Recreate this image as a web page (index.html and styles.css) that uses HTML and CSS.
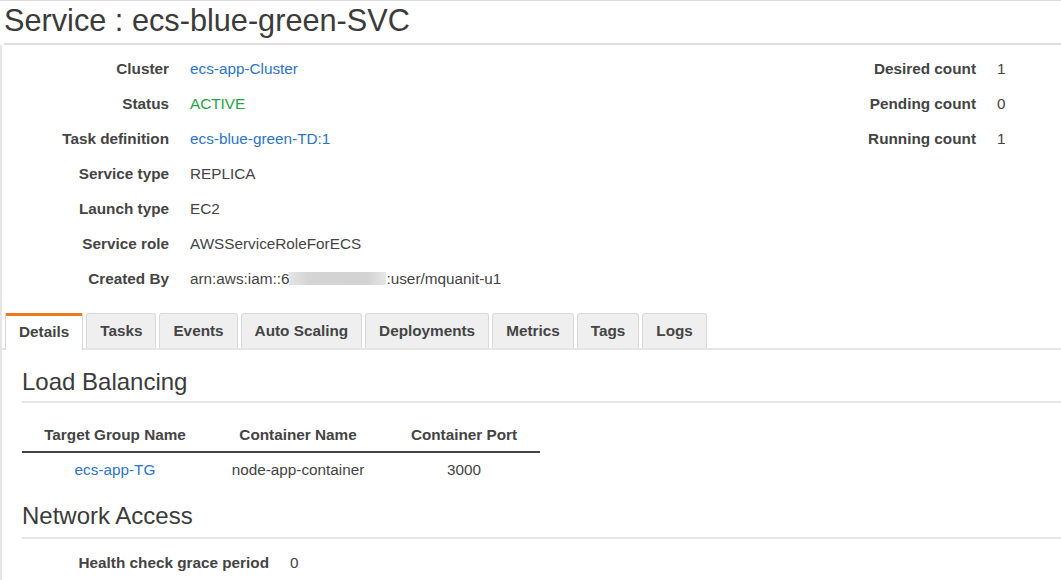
FILE: index.html
```html
<!DOCTYPE html>
<html>
<head>
<meta charset="utf-8">
<title>Service : ecs-blue-green-SVC</title>
<link rel="stylesheet" href="styles.css">
</head>
<body>
<h1 class="title">Service : ecs-blue-green-SVC</h1>
<div class="page">
  <div class="summary">
    <dl class="kv kv-left">
      <dt>Cluster</dt><dd><a class="link" href="#">ecs-app-Cluster</a></dd>
      <dt>Status</dt><dd class="ok">ACTIVE</dd>
      <dt>Task definition</dt><dd><a class="link" href="#">ecs-blue-green-TD:1</a></dd>
      <dt>Service type</dt><dd>REPLICA</dd>
      <dt>Launch type</dt><dd>EC2</dd>
      <dt>Service role</dt><dd>AWSServiceRoleForECS</dd>
      <dt>Created By</dt><dd>arn:aws:iam::6<span class="blur"></span>:user/mquanit-u1</dd>
    </dl>
    <dl class="kv kv-right">
      <dt>Desired count</dt><dd>1</dd>
      <dt>Pending count</dt><dd>0</dd>
      <dt>Running count</dt><dd>1</dd>
    </dl>
  </div>

  <div class="tabs">
    <div class="tab active">Details</div>
    <div class="tab">Tasks</div>
    <div class="tab">Events</div>
    <div class="tab">Auto Scaling</div>
    <div class="tab">Deployments</div>
    <div class="tab">Metrics</div>
    <div class="tab">Tags</div>
    <div class="tab">Logs</div>
  </div>

  <div class="panel">
    <h2 class="section">Load Balancing</h2>
    <table class="lb">
      <thead>
        <tr><th class="c1">Target Group Name</th><th class="c2">Container Name</th><th class="c3">Container Port</th></tr>
      </thead>
      <tbody>
        <tr><td><a class="link" href="#">ecs-app-TG</a></td><td>node-app-container</td><td>3000</td></tr>
      </tbody>
    </table>

    <h2 class="section section-2">Network Access</h2>
    <dl class="kv kv-net">
      <dt>Health check grace period</dt><dd>0</dd>
    </dl>
  </div>
</div>
</body>
</html>
```

FILE: styles.css
```css
html, body {
  margin: 0;
  padding: 0;
  background: #fff;
}
body {
  font-family: "Liberation Sans", Arial, sans-serif;
  font-size: 15.3px;
  color: #444;
  border-top: 1px solid #dcdcdc;
  overflow: hidden;
}
.title {
  margin: 0 0 0 4px;
  font-size: 30.7px;
  font-weight: normal;
  line-height: 40px;
  padding-bottom: 2px;
  color: #3b3b3b;
  border-bottom: 2px solid #dedede;
}
.page {
  border-left: 2px solid #e6e6e6;
}
.summary {
  display: flex;
  justify-content: space-between;
  padding-top: 6px;
}
.kv {
  display: grid;
  margin: 0;
  column-gap: 21px;
  grid-auto-rows: 35px;
  line-height: 35px;
}
.kv dt {
  font-weight: bold;
  text-align: right;
  color: #444;
}
.kv dd {
  margin: 0;
  white-space: nowrap;
}
.kv-left {
  grid-template-columns: 167px auto;
}
.kv-right {
  grid-template-columns: 160px 64px;
}
.link {
  color: #2b74c7;
  text-decoration: none;
}
.ok {
  color: #23a344;
}
.blur {
  display: inline-block;
  width: 97px;
  height: 13px;
  vertical-align: -1px;
  background: linear-gradient(90deg, #e6e6e6, #d4d4d4 20%, #d2d2d2 80%, #e6e6e6);
  filter: blur(0.6px);
}
.tabs {
  display: flex;
  align-items: flex-start;
  margin-top: 17px;
  padding-left: 3px;
  border-bottom: 2px solid #e6e6e6;
  height: 35px;
}
.tab {
  box-sizing: border-box;
  height: 35px;
  line-height: 34px;
  padding: 0 13px;
  margin-right: 3px;
  border: 1px solid #d9d9d9;
  border-bottom: none;
  border-radius: 3px 3px 0 0;
  background: #efefef;
  font-weight: bold;
  color: #444;
}
.tab.active {
  height: 37px;
  line-height: 32px;
  border-top: 3px solid #ec7a1c;
  border-radius: 2px 2px 0 0;
  background: #fff;
  position: relative;
}
.panel {
  padding-left: 20px;
}
.section {
  margin: 17px 0 0;
  font-size: 24px;
  font-weight: normal;
  line-height: 30px;
  padding-bottom: 4px;
  color: #3b3b3b;
  border-bottom: 2px solid #e6e6e6;
}
.section-2 {
  margin-top: 14px;
  padding-bottom: 6px;
}
.lb {
  margin-top: 15px;
  border-collapse: collapse;
  text-align: center;
}
.lb th {
  font-weight: bold;
  line-height: 18px;
  padding: 8px 0 7px;
  border-bottom: 2px solid #444;
  color: #444;
}
.lb td {
  line-height: 18px;
  padding: 8px 0;
}
.c1 { width: 186px; }
.c2 { width: 180px; }
.c3 { width: 152px; }
.kv-net {
  margin-top: 6px;
  grid-template-columns: 247px auto;
}
```
